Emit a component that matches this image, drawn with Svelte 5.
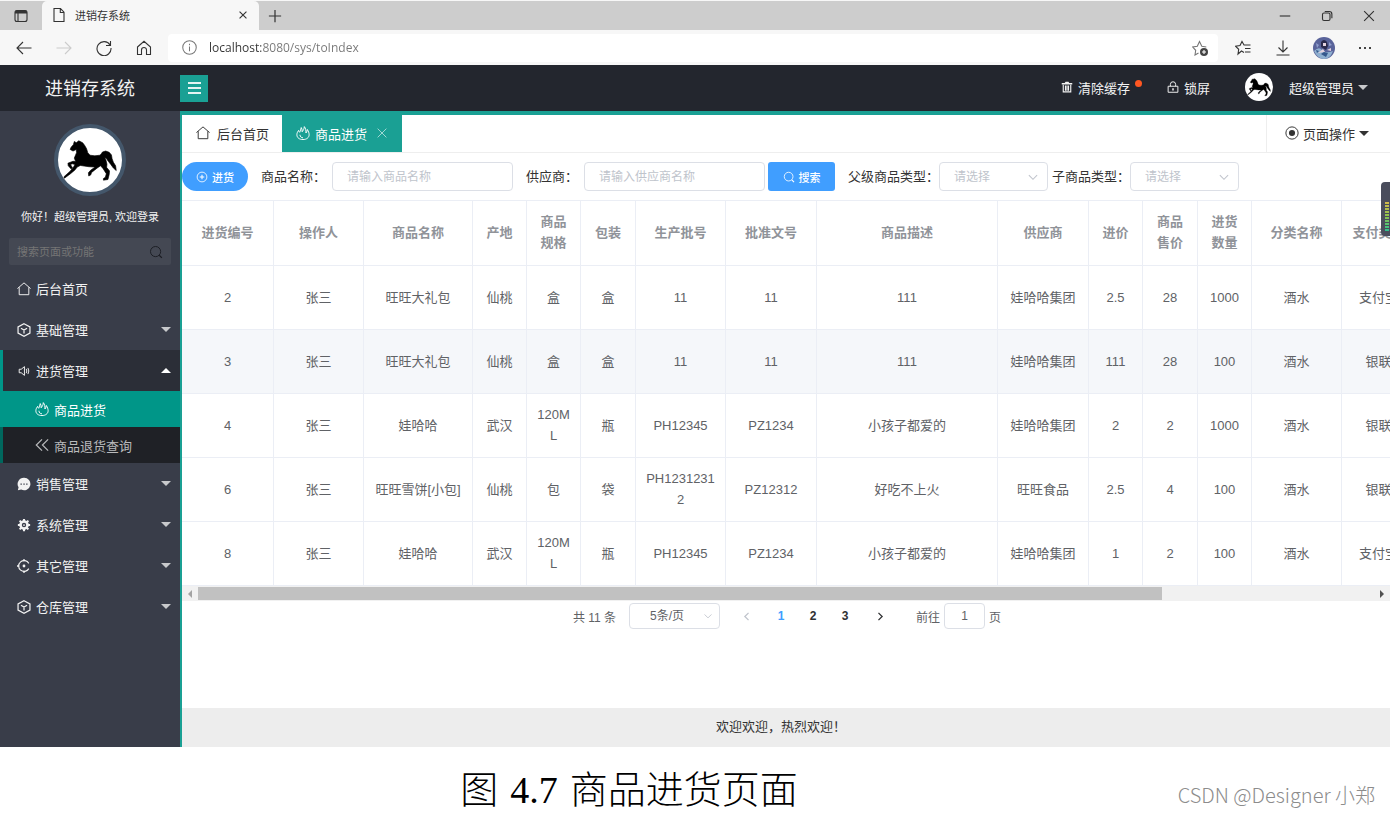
<script lang="ts">
  type Row = (string | number)[];

  const columns = [
    { label: "进货编号", width: 92 },
    { label: "操作人", width: 90 },
    { label: "商品名称", width: 109 },
    { label: "产地", width: 54 },
    { label: "商品规格", width: 54 },
    { label: "包装", width: 55 },
    { label: "生产批号", width: 90 },
    { label: "批准文号", width: 91 },
    { label: "商品描述", width: 181 },
    { label: "供应商", width: 91 },
    { label: "进价", width: 54 },
    { label: "商品售价", width: 55 },
    { label: "进货数量", width: 54 },
    { label: "分类名称", width: 90 },
    { label: "支付类型", width: 74 },
  ];

  const tableWidth = columns.reduce((sum, c) => sum + c.width, 0);

  const rows: Row[] = [
    [2, "张三", "旺旺大礼包", "仙桃", "盒", "盒", "11", "11", "111", "娃哈哈集团", 2.5, 28, 1000, "酒水", "支付宝"],
    [3, "张三", "旺旺大礼包", "仙桃", "盒", "盒", "11", "11", "111", "娃哈哈集团", 111, 28, 100, "酒水", "银联"],
    [4, "张三", "娃哈哈", "武汉", "120ML", "瓶", "PH12345", "PZ1234", "小孩子都爱的", "娃哈哈集团", 2, 2, 1000, "酒水", "银联"],
    [6, "张三", "旺旺雪饼[小包]", "仙桃", "包", "袋", "PH12312312", "PZ12312", "好吃不上火", "旺旺食品", 2.5, 4, 100, "酒水", "银联"],
    [8, "张三", "娃哈哈", "武汉", "120ML", "瓶", "PH12345", "PZ1234", "小孩子都爱的", "娃哈哈集团", 1, 2, 100, "酒水", "支付宝"],
  ];

  const menu = [
    { label: "后台首页", icon: "home" },
    { label: "基础管理", icon: "cube", more: true },
    {
      label: "进货管理",
      icon: "speaker",
      more: true,
      open: true,
      children: [
        { label: "商品进货", icon: "fire", active: true },
        { label: "商品退货查询", icon: "back" },
      ],
    },
    { label: "销售管理", icon: "chat", more: true },
    { label: "系统管理", icon: "gear", more: true },
    { label: "其它管理", icon: "ring", more: true },
    { label: "仓库管理", icon: "cube", more: true },
  ];

  let url = $state("localhost:8080/sys/toIndex");
  let page = $state(1);
  let hovered = $state(1);
</script>

{#snippet icon(name: string)}
  <svg class="icon" viewBox="0 0 16 16" aria-hidden="true">
    {#if name === "home"}
      <path d="M.5 7.5 8 1l7.500 6.500M2.500 6v8.500h11V6" />
    {:else if name === "cube"}
      <path d="M8 .8 14.8 4.400v7.200L8 15.200 1.200 11.600V4.400zM4.500 6 8 8l3.500-2M8 8v4" stroke-width="1.4" />
    {:else if name === "speaker"}
      <path d="M2.500 6v4h2.300L8.500 13V3L4.800 6zM10.500 5.500q1.500 2.500 0 5M12.500 4.500q2 3.500 0 7" />
    {:else if name === "fire"}
      <path d="M3 5C1.500 7 1 8.500 1 10c0 3.500 3 5.500 7 5.500s7-2.200 7-5.500c0-2-.8-4-2-6-.4 1.800-.8 3-1.600 4C11.500 5 11 2.500 9.500.7 9.300 3.500 8.300 5 7 6.600 7.200 4.500 6.800 3 6 1.800 5.600 4 5 5.600 4.200 7.200 3.500 6.700 3.200 6 3 5z" />
      <path d="M4.500 10c0 2 1.500 3.500 3.500 3.500" />
    {:else if name === "back"}
      <path d="M8 1.500 1.500 8 8 14.500M15 1.500 8.500 8l6.500 6.500" stroke-width="1.4" />
    {:else if name === "chat"}
      <path class="solid" d="M8 .8a7.200 7.200 0 1 1-3.200 13.600L1 15.200l.8-3.400A7.200 7.200 0 0 1 8 .8z" />
      <path class="holes" d="M4 7.300h1.500v1.500H4zM7.300 7.300h1.500v1.500H7.300zM10.500 7.300H12v1.500h-1.500z" />
    {:else if name === "gear"}
      <circle cx="8" cy="8" r="4" stroke-width="3" />
      <path d="M8 1v3M8 12v3M1 8h3M12 8h3M3 3l2 2M11 11l2 2M13 3l-2 2M5 11l-2 2" stroke-width="2.4" />
      <circle class="solid" cx="8" cy="8" r="1" />
    {:else if name === "ring"}
      <path d="M13.500 5A6.200 6.200 0 1 0 13.500 11" stroke-width="1.3" />
      <path d="M8 0v2.500M8 13.500V16M0 8h2.500" stroke-width="1.5" />
      <circle class="solid" cx="8" cy="8" r="1.6" />
    {:else if name === "trash"}
      <path class="solid" d="M1 2.500h4L6 1h4l1 1.500h4v2H1z" />
      <path d="M3 5v9.500h10V5M6 6v7M8 6v7M10 6v7" stroke-width="1.5" />
    {:else if name === "lock"}
      <path d="M1.500 7h13v8h-13zM4.500 7V4.500a3.500 3.500 0 0 1 7 0V7" stroke-width="1.3" />
      <path class="solid" d="M7 9.500h2v3H7z" />
    {:else if name === "radio"}
      <circle cx="8" cy="8" r="7" />
      <circle class="solid" cx="8" cy="8" r="3.5" />
    {:else if name === "plus-circle"}
      <circle cx="8" cy="8" r="6.5" />
      <path d="M8 5v6M5 8h6" stroke-width="1.4" />
    {:else if name === "search"}
      <circle cx="7.5" cy="7.5" r="5.8" />
      <path d="m11.700 11.700 3 3" stroke-width="1.5" />
    {:else if name === "close"}
      <path d="m3 3 10 10M13 3 3 13" />
    {:else if name === "down"}
      <path d="m2.500 5.500 5.500 5.500 5.500-5.500" />
    {:else if name === "left"}
      <path d="M10.500 3.500 6 8l4.500 4.500" stroke-width="1.6" />
    {:else if name === "right"}
      <path d="M5.500 3.500 10 8l-4.500 4.500" stroke-width="1.6" />
    {/if}
  </svg>
{/snippet}

{#snippet horse()}
  <svg class="horse" viewBox="168 50 200 200" aria-hidden="true">
    <path
      d="M206 117 209 110 216 102 219 92 225 96 233 90 245 96 251 104 257 114 261 127 268 135 283 137 299 135 303 131
      307 125 317 122 328 126 335 134 337 146 341 157 348 168 350 183 341 175 333 164 325 154 319 145 314 142 318 151
      321 163 320 173 329 184 328 195 324 211 310 213 310 208 316 204 319 193 309 177 301 168 292 174 283 181 273 189
      270 197 264 200 263 190 270 182 284 172 265 171 250 169 238 167 228 172 221 181 207 193 188 207 186 203 206 185
      217 171 221 164 213 162 207 164 213 174 209 178 200 168 199 160 215 154 223 155 219 144 226 127 225 117 215 122z"
    />
  </svg>
{/snippet}

<div class="browser">
  <div class="titlebar">
    <button class="chrome-btn panes" aria-label="标签页操作">
      <svg viewBox="0 0 16 16"><rect x="2" y="2.5" width="12" height="11" rx="2" /><path d="M2 4.500h12M2.500 3.500h11" stroke-width="2" /><path d="M5 5v8" /></svg>
    </button>
    <div class="browser-tab">
      <svg viewBox="0 0 16 16"><path d="M3 1.500h6.500L13 5.200v9.300H3zM9.300 1.500v4H13" /></svg>
      <span>进销存系统</span>
      <button class="chrome-btn" aria-label="关闭标签页">
        <svg class="tiny" viewBox="0 0 16 16"><path d="m2.500 2.500 11 11M13.500 2.500l-11 11" stroke-width="1.8" /></svg>
      </button>
    </div>
    <button class="chrome-btn new-tab" aria-label="新建标签页">
      <svg viewBox="0 0 16 16"><path d="M8 1v14M1 8h14" stroke-width="1.4" /></svg>
    </button>
    <div class="window-btns">
      <button class="chrome-btn" aria-label="最小化"><svg class="small" viewBox="0 0 16 16"><path d="M1 8h14" stroke-width="1.5" /></svg></button>
      <button class="chrome-btn" aria-label="还原"><svg class="small" viewBox="0 0 16 16"><rect x="2" y="4" width="10" height="10" rx="2" stroke-width="1.5" /><path d="M5 2h6q3.500 0 3.500 3.500V11" stroke-width="1.5" /></svg></button>
      <button class="chrome-btn" aria-label="关闭"><svg class="small" viewBox="0 0 16 16"><path d="m1.500 1.500 13 13M14.500 1.500l-13 13" stroke-width="1.5" /></svg></button>
    </div>
  </div>
  <div class="toolbar">
    <button class="chrome-btn" aria-label="后退"><svg viewBox="0 0 16 16"><path d="M15.500 8H1M7 2 1 8l6 6" /></svg></button>
    <button class="chrome-btn faded" aria-label="前进"><svg viewBox="0 0 16 16"><path d="M.5 8H15M9 2l6 6-6 6" /></svg></button>
    <button class="chrome-btn" aria-label="刷新"><svg viewBox="0 0 16 16"><path d="M14 5A7 7 0 1 0 15 8M14.500 1v4.500H10" /></svg></button>
    <button class="chrome-btn" aria-label="主页"><svg viewBox="0 0 16 16"><path d="M1.500 7 8 1.300 14.500 7v7.500h-4V10a2.500 2.500 0 0 0-5 0v4.500h-4z" /></svg></button>
    <div class="address">
      <svg class="info" viewBox="0 0 16 16"><circle cx="8" cy="8" r="7.2" /><path d="M8 7v5M8 4v1.500" /></svg>
      <input class="url" aria-label="地址" bind:value={url} />
      <button class="chrome-btn grey" aria-label="收藏此页">
        <svg viewBox="0 0 16 16"><path d="M6.500 13 3 15l.7-4.700L.7 7l4.600-.7L7.500 1.500l2.300 4.800 4.500.7" /><circle class="dark" cx="12" cy="12" r="4" /><path class="light" d="M12 10v4M10 12h4" /></svg>
      </button>
    </div>
    <button class="chrome-btn" aria-label="收藏夹">
      <svg viewBox="0 0 16 16"><path d="M9 12.500 6.500 11 3 14l.7-4.700-3-3L5 5.600 7 1.500l2 3.500h6.500M10 8.500h5.500M10 12h5.500" /></svg>
    </button>
    <button class="chrome-btn" aria-label="下载"><svg viewBox="0 0 16 16"><path d="M8 .5v11M3.500 7.500 8 12l4.500-4.500M1.500 15h13" /></svg></button>
    <button class="profile" aria-label="个人资料">
      <svg viewBox="0 0 22 22">
        <circle cx="11" cy="11" r="11" fill="#59639a" />
        <path d="M1 14q5-5 8-1t11 1q-3 8-9 8T1 14z" fill="#8fb0d0" />
        <path d="M8 5q3-4 6 0l1 4-2 4-5-3z" fill="#2b2a4b" />
        <path d="M10 6h3v3h-3zM5 16l5-4 2 3zM14 13l4-2v3z" fill="#e4d3de" />
        <path d="M3 6l3 2-2 3zM16 5l3 3-3 1z" fill="#8f9dcc" />
        <path d="M8 17l3-2 4 1-2 4zM3 13l3 1-2 2z" fill="#35588c" />
      </svg>
    </button>
    <button class="chrome-btn" aria-label="更多">
      <svg viewBox="0 0 16 16"><path class="dark" d="M2 7h2v2H2zM7 7h2v2H7zM12 7h2v2h-2z" /></svg>
    </button>
  </div>
</div>

<div class="app">
  <header class="header">
    <h1>进销存系统</h1>
    <button class="fold" aria-label="折叠菜单"><i></i><i></i><i></i></button>
    <div class="header-right">
      <a href="#cache" class="cache">{@render icon("trash")}清除缓存<span class="dot"></span></a>
      <a href="#lock" class="lock">{@render icon("lock")}锁屏</a>
      <a href="#user" class="user"><span class="avatar">{@render horse()}</span>超级管理员<span class="caret"></span></a>
    </div>
  </header>

  <div class="body">
    <aside class="side">
      <div class="face">{@render horse()}</div>
      <p class="hello">你好！超级管理员, 欢迎登录</p>
      <div class="side-search">
        <input aria-label="搜索页面或功能" placeholder="搜索页面或功能" />
        {@render icon("search")}
      </div>
      <nav>
        {#each menu as item}
          <a href="#menu" class="item" class:open={item.open}>
            {@render icon(item.icon)}
            {item.label}
            {#if item.more}<span class="caret" class:up={item.open}></span>{/if}
          </a>
          {#if item.children}
            <div class="sub">
              {#each item.children as child}
                <a href="#page" class="child" class:active={child.active}>{@render icon(child.icon)}{child.label}</a>
              {/each}
            </div>
          {/if}
        {/each}
      </nav>
    </aside>

    <main class="main">
      <div class="tabs">
        <a href="#home" class="tab">{@render icon("home")}后台首页</a>
        <a href="#stock" class="tab current">{@render icon("fire")}商品进货<span class="tab-close">{@render icon("close")}</span></a>
        <a href="#ops" class="page-ops">{@render icon("radio")}页面操作<span class="caret"></span></a>
      </div>

      <form class="filters" onsubmit={(e) => e.preventDefault()}>
        <button type="button" class="primary round">{@render icon("plus-circle")}进货</button>
        <label for="goods">商品名称：</label>
        <input id="goods" class="box" placeholder="请输入商品名称" />
        <label for="supplier">供应商：</label>
        <input id="supplier" class="box" placeholder="请输入供应商名称" />
        <button class="primary">{@render icon("search")}搜索</button>
        <label for="parent" class="tight">父级商品类型：</label>
        <span class="pick">
          <select id="parent"><option>请选择</option></select>
          {@render icon("down")}
        </span>
        <label for="child" class="tight last">子商品类型：</label>
        <span class="pick">
          <select id="child"><option>请选择</option></select>
          {@render icon("down")}
        </span>
      </form>

      <div class="table-wrap">
        <table style="width: {tableWidth}px">
          <colgroup>
            {#each columns as col}<col style="width: {col.width}px" />{/each}
          </colgroup>
          <thead>
            <tr>{#each columns as col}<th>{col.label}</th>{/each}</tr>
          </thead>
          <tbody>
            {#each rows as row, i}
              <tr class:hover={hovered === i} onmouseenter={() => (hovered = i)}>
                {#each row as cell}<td>{cell}</td>{/each}
              </tr>
            {/each}
          </tbody>
        </table>
      </div>
      <div class="scrollbar">
        <span class="arrow"></span>
        <div class="track"><div class="thumb"></div></div>
        <span class="arrow next"></span>
      </div>

      <div class="pagination">
        <span>共 11 条</span>
        <span class="pick size">
          <select aria-label="每页条数"><option>5条/页</option></select>
          {@render icon("down")}
        </span>
        <div class="pager">
          <button class="step" disabled aria-label="上一页">{@render icon("left")}</button>
          {#each [1, 2, 3] as n}
            <button class:on={page === n} onclick={() => (page = n)}>{n}</button>
          {/each}
          <button class="step" aria-label="下一页">{@render icon("right")}</button>
        </div>
        <label class="jump">前往 <input value="1" /> 页</label>
      </div>

      <footer>欢迎欢迎，热烈欢迎！</footer>
      <div class="meter"><span></span></div>
    </main>
  </div>
</div>

<div class="caption">
  <p><span>图</span><span>4.7</span><span>商品进货页面</span></p>
  <small>CSDN @Designer 小郑</small>
</div>

<style>
  :global(body) {
    margin: 0;
    background: #fff;
    font-family: "Liberation Sans", "Noto Sans CJK SC", sans-serif;
    font-size: 13px;
    color: #333;
    overflow-x: hidden;
  }
  a {
    color: inherit;
    text-decoration: none;
  }
  button,
  input,
  select {
    font-family: inherit;
    box-sizing: border-box;
  }
  button {
    border: 0;
    padding: 0;
    background: none;
    color: inherit;
    display: flex;
    align-items: center;
    justify-content: center;
  }
  svg {
    display: block;
    flex: none;
    fill: none;
    stroke: currentColor;
    stroke-width: 1.1;
  }
  .icon {
    width: 14px;
    height: 14px;
  }
  .solid {
    fill: currentColor;
    stroke: none;
  }
  .holes {
    fill: #393d49;
    stroke: none;
  }
  .horse {
    width: 100%;
    height: 100%;
    fill: #000;
    stroke: #000;
    stroke-width: 2;
  }
  .caret {
    border: 5px solid transparent;
    border-top-color: currentColor;
    border-bottom: 0;
  }
  .caret.up {
    border-top: 0;
    border-bottom: 5px solid currentColor;
  }

  /* browser window */
  .chrome-btn {
    width: 28px;
    height: 28px;
    color: #333;
  }
  .chrome-btn svg,
  .browser-tab > svg {
    width: 16px;
    height: 16px;
  }
  .chrome-btn .small {
    width: 12px;
    height: 12px;
  }
  .chrome-btn .tiny {
    width: 10px;
    height: 10px;
  }
  .faded {
    color: #ccc;
  }
  .grey {
    color: #777;
  }
  .dark {
    fill: #444;
    stroke: none;
  }
  .light {
    stroke: #fff;
  }
  .titlebar {
    display: flex;
    align-items: center;
    height: 29px;
    border-top: 1px solid #f7f7f7;
    background: #cdcdcd;
  }
  .panes {
    width: 42px;
  }
  .browser-tab {
    display: flex;
    align-items: center;
    align-self: stretch;
    gap: 8px;
    width: 217px;
    padding: 0 2px 1px 9px;
    box-sizing: border-box;
    border-radius: 5px 5px 0 0;
    background: #f7f7f7;
    font-size: 11px;
  }
  .browser-tab .chrome-btn {
    margin-left: auto;
  }
  .new-tab {
    width: 32px;
  }
  .new-tab svg {
    width: 14px;
    height: 14px;
  }
  .window-btns {
    display: flex;
    gap: 14px;
    margin-left: auto;
    padding-right: 7px;
  }
  .toolbar {
    display: flex;
    align-items: center;
    gap: 12px;
    height: 35px;
    padding: 0 11px 0 10px;
    background: #f7f7f7;
  }
  .address {
    flex: 1;
    display: flex;
    align-items: center;
    height: 28px;
    margin: 0 -1px 0 -2px;
    padding: 0 4px 0 14px;
    border-radius: 4px;
    background: #fff;
  }
  .info {
    width: 15px;
    height: 15px;
    color: #777;
  }
  .url {
    flex: 1;
    margin-left: 10px;
    padding: 0 2px;
    border: 0;
    font-family: "Open Sans", sans-serif;
    font-size: 12px;
    background: linear-gradient(to right, #333 54px, #777 54px);
    background-clip: text;
    -webkit-text-fill-color: transparent;
  }
  .profile svg {
    width: 22px;
    height: 22px;
    margin: 0 4px;
    stroke: none;
  }

  /* header */
  .header {
    display: flex;
    align-items: center;
    height: 46px;
    background: #23262e;
    color: #f2f2f2;
  }
  h1 {
    width: 180px;
    margin: 0;
    padding-bottom: 2px;
    text-align: center;
    font-size: 18px;
    font-weight: 400;
  }
  .fold {
    flex-direction: column;
    gap: 3px;
    width: 28px;
    height: 27px;
    background: #1aa094;
  }
  .fold i {
    width: 13px;
    height: 2px;
    background: #e4f4f2;
  }
  .header-right {
    display: flex;
    align-items: center;
    margin-left: auto;
    padding: 0 22px 2px 0;
  }
  .header-right a {
    display: flex;
    align-items: center;
    gap: 5px;
  }
  .header-right .icon {
    width: 12px;
    height: 12px;
  }
  .header-right .caret {
    margin-left: -1px;
    color: #c8c9cc;
  }
  .dot {
    width: 7px;
    height: 7px;
    margin-bottom: 7px;
    border-radius: 50%;
    background: #ff5722;
  }
  .lock {
    margin-left: 25px;
  }
  .user {
    margin-left: 35px;
  }
  .avatar {
    width: 28px;
    height: 28px;
    margin-right: 11px;
    border-radius: 50%;
    background: #fff;
    overflow: hidden;
  }

  /* sidebar */
  .body {
    display: flex;
  }
  .side {
    width: 180px;
    flex: none;
    border-right: 2px solid #1aa094;
    background: #393d49;
    color: #f2f2f2;
  }
  .face {
    width: 64px;
    height: 64px;
    margin: 13px auto 0;
    border: 4px solid #44576b;
    border-radius: 50%;
    background: #fff;
    overflow: hidden;
  }
  .hello {
    margin: 12px 0 0;
    text-align: center;
    font-size: 11px;
    line-height: 18px;
  }
  .side-search {
    display: flex;
    align-items: center;
    height: 27px;
    margin: 12px 9px 3px;
    padding: 0 8px;
    border-radius: 2px;
    background: #444853;
    color: #1c1e24;
  }
  .side-search input {
    flex: 1;
    min-width: 0;
    padding: 0;
    border: 0;
    background: none;
    color: #fff;
    font-size: 11px;
  }
  .side-search input::placeholder {
    color: #757575;
  }
  .item {
    display: flex;
    align-items: center;
    gap: 5px;
    height: 41px;
    padding: 0 9px 0 17px;
  }
  .item.open {
    padding-left: 14px;
    border-left: 3px solid #009688;
    background: #2b2e37;
  }
  .item .caret {
    margin-left: auto;
    color: #c8c9cc;
  }
  .item.open .caret {
    color: #fff;
  }
  .sub {
    background: #1f2126;
  }
  .child {
    display: flex;
    align-items: center;
    gap: 5px;
    height: 36px;
    padding-left: 32px;
    border-left: 3px solid #00675d;
    color: #b9babc;
  }
  .child.active {
    border-color: #009688;
    background: #009688;
    color: #fff;
  }

  /* content */
  .main {
    position: relative;
    display: flex;
    flex-direction: column;
    flex: 1;
    min-width: 0;
    border-top: 4px solid #1aa094;
  }
  .tabs {
    display: flex;
    height: 37px;
    border-bottom: 1px solid #eee;
  }
  .tab,
  .page-ops {
    display: flex;
    align-items: center;
    gap: 7px;
    padding: 0 13px 1px 14px;
  }
  .current {
    gap: 5px;
    padding-right: 12px;
    background: #1aa094;
    color: #fff;
  }
  .tab-close {
    margin: 0 1px 0 3px;
    opacity: 0.6;
  }
  .page-ops {
    gap: 4px;
    margin-left: auto;
    padding: 0 21px 1px 18px;
    border-left: 1px solid #eee;
  }
  .filters {
    display: flex;
    align-items: center;
    padding: 9px 0;
    white-space: nowrap;
  }
  .primary {
    gap: 4px;
    flex: none;
    width: 67px;
    height: 29px;
    margin-left: 3px;
    border-radius: 3px;
    background: #409eff;
    color: #fff;
    font-size: 11px;
    font-weight: 500;
  }
  .primary .icon {
    width: 12px;
    height: 12px;
  }
  .round {
    width: 66px;
    margin-left: 0;
    border-radius: 15px;
  }
  .filters label {
    margin: 0 6px 0 13px;
    padding-bottom: 2px;
  }
  .filters .tight {
    margin-right: 0;
  }
  .filters .last {
    margin-left: 4px;
  }
  .box {
    width: 181px;
    height: 29px;
    padding: 0 14px;
    border: 1px solid #dcdfe6;
    border-radius: 4px;
    font-size: 12px;
  }
  .box::placeholder {
    color: #c0c4cc;
  }
  .pick {
    position: relative;
    display: block;
  }
  .pick select {
    width: 109px;
    height: 29px;
    padding: 0 14px;
    border: 1px solid #dcdfe6;
    border-radius: 4px;
    background: #fff;
    color: #c0c4cc;
    font-size: 12px;
    appearance: none;
  }
  .pick .icon {
    position: absolute;
    top: 50%;
    right: 9px;
    width: 12px;
    height: 12px;
    margin-top: -6px;
    color: #c0c4cc;
    stroke-width: 1.4;
    pointer-events: none;
  }
  .table-wrap {
    overflow: hidden;
    border-top: 1px solid #ebeef5;
  }
  table {
    table-layout: fixed;
    border-collapse: separate;
    border-spacing: 0;
    line-height: 21px;
    color: #606266;
  }
  th,
  td {
    box-sizing: border-box;
    height: 64px;
    padding: 0 10px 1px;
    border-right: 1px solid #ebeef5;
    border-bottom: 1px solid #ebeef5;
    text-align: center;
    word-break: break-all;
  }
  th {
    height: 65px;
    padding-bottom: 2px;
    color: #909399;
  }
  .hover {
    background: #f5f7fa;
  }
  .scrollbar {
    display: flex;
    align-items: center;
    height: 15px;
    background: #f1f1f1;
  }
  .arrow {
    flex: none;
    width: 0;
    margin: 0 6px;
    border: 4px solid transparent;
    border-right-color: #a3a3a3;
    border-left: 0;
  }
  .arrow.next {
    border-right: 0;
    border-left: 4px solid #505050;
  }
  .track {
    flex: 1;
  }
  .thumb {
    width: 82%;
    height: 13px;
    background: #c1c1c1;
  }
  .pagination {
    display: flex;
    align-items: center;
    justify-content: center;
    padding: 2px 0 0 2px;
    color: #606266;
    font-size: 12px;
  }
  .size {
    margin: 0 7px 0 13px;
  }
  .size select {
    width: 91px;
    height: 26px;
    padding: 0 20px;
    color: #606266;
  }
  .size .icon {
    right: 7px;
    width: 10px;
    height: 10px;
    margin-top: -5px;
  }
  .pager {
    display: flex;
  }
  .pager button {
    width: 32px;
    height: 26px;
    color: #303133;
    font-size: 12px;
    font-weight: 700;
  }
  .pager .step {
    width: 38px;
  }
  .pager .icon {
    width: 13px;
    height: 13px;
  }
  .pager button:disabled {
    color: #c0c4cc;
  }
  .pager .on {
    color: #409eff;
  }
  .jump {
    display: flex;
    align-items: center;
    gap: 4px;
    margin-left: 17px;
  }
  .jump input {
    width: 41px;
    height: 26px;
    padding: 0;
    border: 1px solid #dcdfe6;
    border-radius: 4px;
    color: #606266;
    font-size: 12px;
    text-align: center;
  }
  footer {
    height: 39px;
    margin-top: 79px;
    padding-right: 10px;
    background: #ededed;
    text-align: center;
    line-height: 38px;
  }
  /* floating level gauge on the window edge */
  .meter {
    position: absolute;
    top: 67px;
    right: 0;
    width: 9px;
    height: 54px;
    box-sizing: border-box;
    padding: 19px 0 5px 4px;
    border-radius: 4px 0 0 4px;
    background: #4a4d5c;
  }
  .meter span {
    display: block;
    width: 4px;
    height: 30px;
    background:
      repeating-linear-gradient(#4a4d5c 0 1px, transparent 1px 3px),
      linear-gradient(#d8b94a, #8fc24e 50%, #2cc08f);
  }

  .caption {
    position: relative;
    color: #000;
  }
  .caption p {
    display: flex;
    justify-content: center;
    gap: 12px;
    margin: 0;
    padding: 19px 132px 0 0;
    font-family: "Liberation Serif", "Noto Sans CJK SC", serif;
    font-size: 38px;
    font-weight: 300;
    line-height: 49px;
  }
  .caption small {
    position: absolute;
    right: 15px;
    bottom: 6px;
    color: #8c8c8c;
    font-family: "Noto Sans CJK SC", sans-serif;
    font-size: 20px;
    font-weight: 300;
    line-height: 28px;
  }
</style>
